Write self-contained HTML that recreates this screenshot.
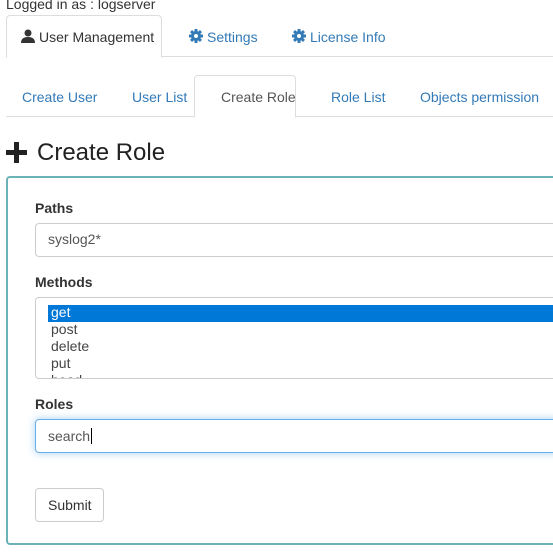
<!DOCTYPE html>
<html><head><style>
body{margin:0;font-family:"Liberation Sans",sans-serif;font-size:14px;color:#333;width:553px;height:559px;overflow:hidden;position:relative;background:#fff}
.a{position:absolute}
.blue{color:#337ab7}
</style></head><body>
<div class="a" style="left:6px;top:-4px;font-size:14px;color:#333">Logged in as : logserver</div>
<div class="a" style="left:6px;top:56px;width:560px;border-top:1px solid #ddd"></div>
<div class="a" style="left:6px;top:15px;width:154px;height:41px;border:1px solid #ddd;border-bottom:1px solid #fff;border-radius:4px 4px 0 0;background:#fff"></div>
<svg class="a" style="left:21px;top:29px" width="14" height="14" viewBox="0 0 14 14"><circle cx="7" cy="4" r="3.5" fill="#333"/><path d="M0 14 Q0 8 7 8 Q14 8 14 14Z" fill="#333"/></svg>
<div class="a" style="left:39px;top:29px;font-size:14px">User Management</div>
<svg class="a" style="left:189px;top:29px" width="14" height="14" viewBox="0 0 14 14"><g fill="#337ab7"><circle cx="7" cy="7" r="5"/><rect x="5.5" y="0" width="3" height="14"/><rect x="0" y="5.5" width="14" height="3"/><rect x="5.5" y="0" width="3" height="14" transform="rotate(45 7 7)"/><rect x="5.5" y="0" width="3" height="14" transform="rotate(-45 7 7)"/></g><circle cx="7" cy="7" r="2" fill="#fff"/></svg>
<div class="a blue" style="left:207px;top:29px;font-size:14px">Settings</div>
<svg class="a" style="left:292px;top:29px" width="14" height="14" viewBox="0 0 14 14"><g fill="#337ab7"><circle cx="7" cy="7" r="5"/><rect x="5.5" y="0" width="3" height="14"/><rect x="0" y="5.5" width="14" height="3"/><rect x="5.5" y="0" width="3" height="14" transform="rotate(45 7 7)"/><rect x="5.5" y="0" width="3" height="14" transform="rotate(-45 7 7)"/></g><circle cx="7" cy="7" r="2" fill="#fff"/></svg>
<div class="a blue" style="left:310px;top:29px;font-size:14px">License Info</div>

<div class="a" style="left:6px;top:116px;width:560px;border-top:1px solid #ddd"></div>
<div class="a" style="left:194px;top:75px;width:100px;height:41px;border:1px solid #ddd;border-bottom:1px solid #fff;border-radius:4px 4px 0 0;background:#fff"></div>
<div class="a blue" style="left:22px;top:89px;font-size:14px">Create User</div>
<div class="a blue" style="left:132px;top:89px;font-size:14px">User List</div>
<div class="a" style="left:221px;top:89px;font-size:14px;color:#555">Create Role</div>
<div class="a blue" style="left:331px;top:89px;font-size:14px">Role List</div>
<div class="a blue" style="left:420px;top:89px;font-size:14px">Objects permission</div>

<svg class="a" style="left:6px;top:142px" width="21" height="21" viewBox="0 0 21 21"><path d="M8 0h5v8h8v5h-8v8h-5v-8h-8v-5h8z" fill="#222"/></svg>
<div class="a" style="left:37px;top:139px;font-size:24px;color:#222">Create Role</div>

<div class="a" style="left:6px;top:176px;width:570px;height:365px;border:2px solid #6ab2b6;border-radius:4px"></div>
<div class="a" style="left:35px;top:200px;font-weight:bold;font-size:14px">Paths</div>
<div class="a" style="left:35px;top:223px;width:540px;height:32px;border:1px solid #ccc;border-radius:4px"></div>
<div class="a" style="left:48px;top:231px;font-size:14px;color:#555">syslog2*</div>
<div class="a" style="left:35px;top:274px;font-weight:bold">Methods</div>
<div class="a" style="left:35px;top:297px;width:540px;height:80px;border:1px solid #ccc;border-radius:4px;overflow:hidden">
 <div style="position:absolute;left:12px;top:7px;width:540px;height:17px;background:#0078d7"></div>
 <div style="position:absolute;left:15px;top:6px;line-height:17px;font-size:14px;color:#444"><span style="color:#fff">get</span><br>post<br>delete<br>put<br>head</div>
</div>
<div class="a" style="left:35px;top:396px;font-weight:bold">Roles</div>
<div class="a" style="left:35px;top:419px;width:540px;height:32px;border:1px solid #66afe9;border-radius:4px;box-shadow:0 0 8px rgba(102,175,233,.6)"></div>
<div class="a" style="left:48px;top:428px;font-size:14px;color:#555">search<span style="border-left:1px solid #000;margin-left:1px"></span></div>
<div class="a" style="left:35px;top:488px;width:67px;height:32px;border:1px solid #ccc;border-radius:4px"></div>
<div class="a" style="left:48px;top:497px;font-size:14px">Submit</div>
</body></html>
